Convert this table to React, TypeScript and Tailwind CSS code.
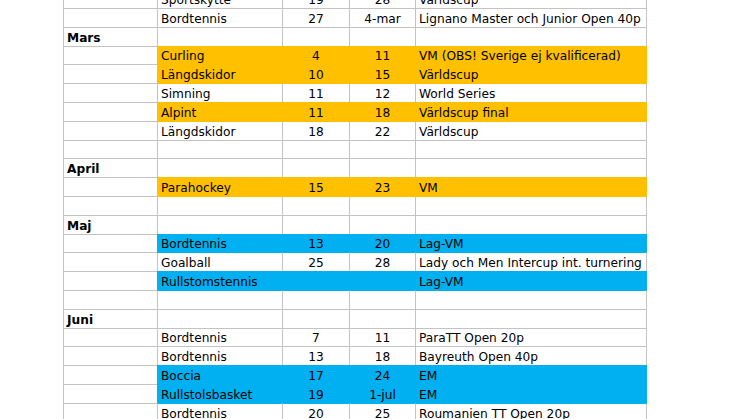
type Fill = "orange" | "blue" | null;

type Row = {
  month?: string;
  sport?: string;
  from?: string;
  to?: string;
  event?: string;
  fill?: Fill;
};

const rows: Row[] = [
  { sport: "Sportskytte", from: "19", to: "28", event: "Världscup" },
  { sport: "Bordtennis", from: "27", to: "4-mar", event: "Lignano Master och Junior Open 40p" },
  { month: "Mars" },
  { sport: "Curling", from: "4", to: "11", event: "VM (OBS! Sverige ej kvalificerad)", fill: "orange" },
  { sport: "Längdskidor", from: "10", to: "15", event: "Världscup", fill: "orange" },
  { sport: "Simning", from: "11", to: "12", event: "World Series" },
  { sport: "Alpint", from: "11", to: "18", event: "Världscup final", fill: "orange" },
  { sport: "Längdskidor", from: "18", to: "22", event: "Världscup" },
  {},
  { month: "April" },
  { sport: "Parahockey", from: "15", to: "23", event: "VM", fill: "orange" },
  {},
  { month: "Maj" },
  { sport: "Bordtennis", from: "13", to: "20", event: "Lag-VM", fill: "blue" },
  { sport: "Goalball", from: "25", to: "28", event: "Lady och Men Intercup int. turnering" },
  { sport: "Rullstomstennis", event: "Lag-VM", fill: "blue" },
  {},
  { month: "Juni" },
  { sport: "Bordtennis", from: "7", to: "11", event: "ParaTT Open 20p" },
  { sport: "Bordtennis", from: "13", to: "18", event: "Bayreuth Open 40p" },
  { sport: "Boccia", from: "17", to: "24", event: "EM", fill: "blue" },
  { sport: "Rullstolsbasket", from: "19", to: "1-jul", event: "EM", fill: "blue" },
  { sport: "Bordtennis", from: "20", to: "25", event: "Roumanien TT Open 20p" },
];

// row heights follow an 18.8px pitch, rounded to whole pixels
const heights = [19, 19, 19, 18, 19, 19, 19, 19, 18, 19, 19, 19, 19, 18, 19, 19, 19, 19, 18, 19, 19, 19, 19];

const bg = { orange: "bg-[#ffc000]", blue: "bg-[#00b0f0]" };
const topLine = { orange: "border-t-[#ffc000]", blue: "border-t-[#00b0f0]" };
const leftLine = { orange: "border-l-[#ffc000]", blue: "border-l-[#00b0f0]" };
const rightLine = { orange: "border-r-[#ffc000]", blue: "border-r-[#00b0f0]" };

function Cell({
  text,
  width,
  fill,
  above,
  left,
  last,
  center,
  bold,
}: {
  text?: string;
  width: string;
  fill: Fill;
  above: Fill;
  left: Fill;
  last?: boolean;
  center?: boolean;
  bold?: boolean;
}) {
  const top = fill ?? above;
  const side = fill ?? left;
  return (
    <div
      className={[
        "flex h-full shrink-0 items-end overflow-visible whitespace-nowrap border-t border-l",
        width,
        fill ? bg[fill] : "bg-white",
        top ? topLine[top] : "border-t-[#c3c3c3]",
        side ? leftLine[side] : "border-l-[#c3c3c3]",
        last ? "border-r" : "",
        last ? (fill ? rightLine[fill] : "border-r-[#c3c3c3]") : "",
        center ? "justify-center" : "pl-[3px]",
        bold ? "font-bold" : "",
      ].join(" ")}
    >
      <span className="leading-[15px]">{text}</span>
    </div>
  );
}

export default function App() {
  return (
    <div className="h-[419px] w-[746px] overflow-hidden bg-white font-['DejaVu_Sans',sans-serif] text-[12.2px] text-black">
      <div className="-mt-[11px] ml-[63px] flex flex-col">
        {rows.map((row, i) => {
          const fill = row.fill ?? null;
          const above = i > 0 ? rows[i - 1].fill ?? null : null;
          return (
            <div key={i} className="flex" style={{ height: heights[i] }}>
              <Cell text={row.month} width="w-[94px]" fill={null} above={null} left={null} bold />
              <Cell text={row.sport} width="w-[125px]" fill={fill} above={above} left={null} />
              <Cell text={row.from} width="w-[67px]" fill={fill} above={above} left={fill} center />
              <Cell text={row.to} width="w-[66px]" fill={fill} above={above} left={fill} center />
              <Cell text={row.event} width="w-[232px]" fill={fill} above={above} left={fill} last />
            </div>
          );
        })}
      </div>
    </div>
  );
}
